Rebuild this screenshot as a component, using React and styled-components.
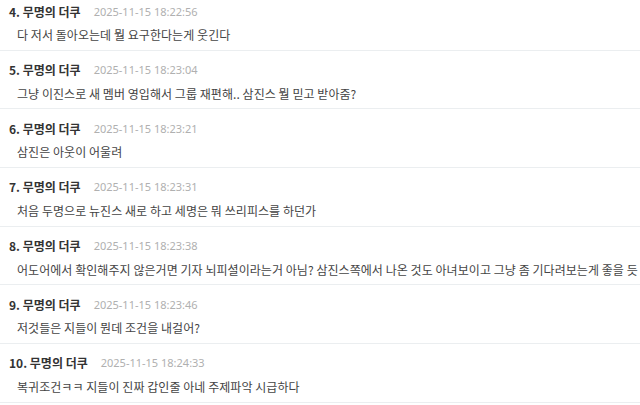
import React from 'react'
import styled, { createGlobalStyle } from 'styled-components'

const GlobalStyle = createGlobalStyle`
  html, body {
    margin: 0;
    padding: 0;
    background: #fff;
  }
  body {
    font-family: "Noto Sans CJK KR", "Noto Sans", sans-serif;
  }
`

const List = styled.ul`
  list-style: none;
  margin: 0;
  padding: 0;
  width: 640px;
  overflow: hidden;
`

const Comment = styled.li`
  padding: ${p => (p.$first ? '2px' : '10px')} 0 5.67px 9px;
  border-bottom: 1px solid #ebeef0;
`

const Header = styled.div`
  display: flex;
  align-items: center;
  gap: 13px;
  height: 18px;
`

const Author = styled.span`
  font-size: 12px;
  font-weight: 700;
  color: #333;
`

const Stamp = styled.span`
  font-size: 11px;
  color: #b0b0b0;
  font-family: "Noto Sans", "Liberation Sans", sans-serif;
`

const Body = styled.p`
  margin: 6px 0 0 8px;
  height: 18px;
  line-height: 18px;
  font-size: 12px;
  letter-spacing: 0.05px;
  color: #444;
  white-space: nowrap;
`

const comments = [
  { n: 4, date: '2025-11-15 18:22:56', text: '다 저서 돌아오는데 뭘 요구한다는게 웃긴다' },
  { n: 5, date: '2025-11-15 18:23:04', text: '그냥 이진스로 새 멤버 영입해서 그룹 재편해.. 삼진스 뭘 믿고 받아줌?' },
  { n: 6, date: '2025-11-15 18:23:21', text: '삼진은 아웃이 어울려' },
  { n: 7, date: '2025-11-15 18:23:31', text: '처음 두명으로 뉴진스 새로 하고 세명은 뭐 쓰리피스를 하던가' },
  { n: 8, date: '2025-11-15 18:23:38', text: '어도어에서 확인해주지 않은거면 기자 뇌피셜이라는거 아님? 삼진스쪽에서 나온 것도 아녀보이고 그냥 좀 기다려보는게 좋을 듯' },
  { n: 9, date: '2025-11-15 18:23:46', text: '저것들은 지들이 뭔데 조건을 내걸어?' },
  { n: 10, date: '2025-11-15 18:24:33', text: '복귀조건ㅋㅋ 지들이 진짜 갑인줄 아네 주제파악 시급하다' },
]

export default function App() {
  return (
    <>
      <GlobalStyle />
      <List>
        {comments.map((c, i) => (
          <Comment key={c.n} $first={i === 0}>
            <Header>
              <Author>{c.n}. 무명의 더쿠</Author>
              <Stamp>{c.date}</Stamp>
            </Header>
            <Body>{c.text}</Body>
          </Comment>
        ))}
      </List>
    </>
  )
}
